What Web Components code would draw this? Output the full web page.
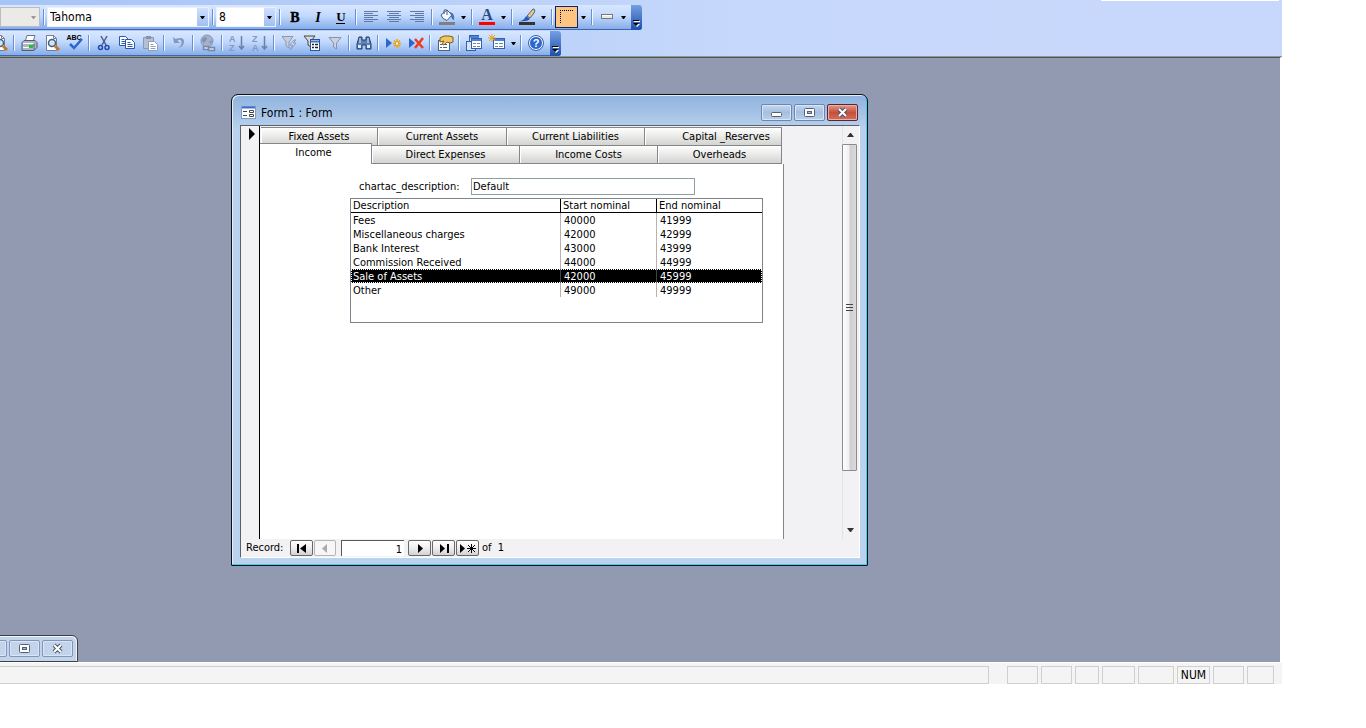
<!DOCTYPE html>
<html lang="en">
<head>
<meta charset="utf-8">
<title>Form1 : Form</title>
<style>
html, body { height: 100%; margin: 0; background: #fff; }
body { font: 11px/14px "DejaVu Sans Condensed", "Noto Sans", sans-serif; color: #000; }
</style>
</head>
<body>
<access-app>
  <tool-bar slot="bars" label="Formatting">
    <tool-combo label="Object" width="40" off></tool-combo>
    <tool-sep></tool-sep>
    <tool-combo label="Font" value="Tahoma" width="162"></tool-combo>
    <tool-sep></tool-sep>
    <tool-combo label="Font size" value="8" width="60"></tool-combo>
    <tool-sep></tool-sep>
    <tool-button icon="bold" label="Bold"></tool-button>
    <tool-button icon="italic" label="Italic"></tool-button>
    <tool-button icon="underline" label="Underline"></tool-button>
    <tool-sep></tool-sep>
    <tool-button icon="left" label="Align left"></tool-button>
    <tool-button icon="center" label="Center"></tool-button>
    <tool-button icon="right" label="Align right"></tool-button>
    <tool-sep></tool-sep>
    <tool-button icon="fill" label="Fill color" menu></tool-button>
    <tool-sep></tool-sep>
    <tool-button icon="fore" label="Font color" menu></tool-button>
    <tool-sep></tool-sep>
    <tool-button icon="brush" label="Line color" menu></tool-button>
    <tool-sep></tool-sep>
    <tool-button icon="border" label="Line width" menu on></tool-button>
    <tool-sep></tool-sep>
    <tool-button icon="effect" label="Special effect" menu></tool-button>
  </tool-bar>
  <tool-bar slot="bars" label="Form view" class="second">
    <tool-button icon="preview" label="Search" clipped></tool-button>
    <tool-sep narrow></tool-sep>
    <tool-button icon="print" label="Print"></tool-button>
    <tool-button icon="preview" label="Print preview"></tool-button>
    <tool-button icon="spell" label="Spelling"></tool-button>
    <tool-sep narrow></tool-sep>
    <tool-button icon="cut" label="Cut"></tool-button>
    <tool-button icon="copy" label="Copy"></tool-button>
    <tool-button icon="paste" label="Paste"></tool-button>
    <tool-sep narrow></tool-sep>
    <tool-button icon="undo" label="Undo"></tool-button>
    <tool-sep narrow></tool-sep>
    <tool-button icon="globe" label="Insert hyperlink"></tool-button>
    <tool-sep narrow></tool-sep>
    <tool-button icon="asc" label="Sort ascending"></tool-button>
    <tool-button icon="desc" label="Sort descending"></tool-button>
    <tool-sep narrow></tool-sep>
    <tool-button icon="filtersel" label="Filter by selection"></tool-button>
    <tool-button icon="filterform" label="Filter by form"></tool-button>
    <tool-button icon="filter" label="Apply filter"></tool-button>
    <tool-sep narrow></tool-sep>
    <tool-button icon="find" label="Find"></tool-button>
    <tool-sep narrow></tool-sep>
    <tool-button icon="newrec" label="New record"></tool-button>
    <tool-button icon="delrec" label="Delete record"></tool-button>
    <tool-sep narrow></tool-sep>
    <tool-button icon="props" label="Properties"></tool-button>
    <tool-sep narrow></tool-sep>
    <tool-button icon="dbwin" label="Database window"></tool-button>
    <tool-button icon="newobj" label="New object" menu></tool-button>
    <tool-sep narrow></tool-sep>
    <tool-button icon="help" label="Help"></tool-button>
  </tool-bar>
  <mdi-window caption="Form1 : Form">
    <record-view>
      <account-tabs></account-tabs>
      <account-form></account-form>
    </record-view>
    <scroll-rail slot="rail"></scroll-rail>
    <record-nav slot="nav"></record-nav>
  </mdi-window>
  <mini-window></mini-window>
  <status-bar slot="status"></status-bar>
</access-app>

<script>
const define = (name, html, setup) => customElements.define(name, class extends HTMLElement {
  connectedCallback() {
    if (this.shadowRoot) return;
    const root = this.attachShadow({ mode: "open" });
    root.innerHTML = typeof html === "function" ? html(this) : html;
    if (setup) setup(this, root);
  }
});

const FUNNEL = '<path d="M3 3.500h12l-4.500 5.500v6l-3-2v-4z"';
const sheet = (x, y, c = "#2a58b0") => `<path d="M${x} ${y}h6l3 3v6h-9z" fill="#fff" stroke="${c}"/><path d="M${x + 2} ${y + 3}h3m-3 2h5m-5 2h5" stroke="${c}" fill="none"/>`;
const lines = (a) => `<path d="${a.map(([x, w], i) => `M${x} ${3.5 + i * 2}h${w}`).join("")}" stroke="#5f7aa8" fill="none"/>`;
const GLASS = '<path d="M3.500 1.500h7l3 3v12h-10z" fill="#fff" stroke="#6f7f9c"/><path d="M10.500 1.500v3h3" fill="none" stroke="#6f7f9c"/><circle cx="9" cy="9" r="3.500" fill="#cfe6f5" stroke="#47617f" stroke-width="1.500"/><path d="M12 12l4 4" stroke="#c47a1c" stroke-width="3"/>';
const ICONS = {
  bold: '<text x="9" y="14" text-anchor="middle" font-family="Liberation Serif" font-weight="700" font-size="14" stroke="#000" stroke-width=".4">B</text>',
  italic: '<text x="9" y="14" text-anchor="middle" font-family="Liberation Serif" font-weight="700" font-style="italic" font-size="14">I</text>',
  underline: '<text x="9" y="13" text-anchor="middle" font-family="Liberation Serif" font-weight="700" font-size="13">U</text><path d="M4 15.500h9" stroke="#000"/>',
  left: lines([[2, 14], [2, 9], [2, 14], [2, 9], [2, 14], [2, 9]]),
  center: lines([[2, 14], [4, 10], [2, 14], [4, 10], [2, 14], [4, 10]]),
  right: lines([[2, 14], [7, 9], [2, 14], [7, 9], [2, 14], [7, 9]]),
  fill: '<path d="M3 7l6-5 5 5-5 5.500-4-2z" fill="#f5f8ff" stroke="#445b85"/><path d="M6 6V2.500q1.500-2 3 0V7" fill="none" stroke="#445b85"/><path d="M12 4q5 1 4 8l-2-1-1-3z" fill="#3e6fc4"/><path d="M1 14h16v3H1z" fill="#808080"/>',
  fore: '<text x="9" y="12" text-anchor="middle" font-family="Liberation Serif" font-weight="700" font-size="16" fill="#2c4a86">A</text><path d="M1 14h16v3H1z" fill="#f00"/>',
  brush: '<path d="M9 8l6-7q3 0 1 4l-4 5z" fill="#f3c877" stroke="#3d5f9e"/><path d="M1 13q5 0 7-5l4 3q-3 3-11 2z" fill="#2a58b0"/><path d="M1 14h16v3H1z" fill="#333"/>',
  border: '<path d="M2 2.500h14M2.500 4v12" fill="none" stroke="#000" stroke-dasharray="1 1"/>',
  effect: '<rect x="3.500" y="6.500" width="11" height="4" fill="#e8e8e8" stroke="#777"/><path d="M4 7.500h10" stroke="#fff"/>',
  preview: GLASS,
  print: '<path d="M5 8l2-6.500h8L13 8" fill="#fff" stroke="#66748c"/><path d="M2 8.500l2-2h11l2 2v5l-3 3H2z" fill="#aeb6c4" stroke="#4e5b70"/><path d="M3 9.500h11M3 13.500h11" stroke="#fff"/><path d="M9 11h4v3H9z" fill="#1fc528"/><path d="M14 9.500v6" stroke="#4e5b70"/>',
  spell: '<text x="8" y="6" text-anchor="middle" font-family="Liberation Sans" font-weight="700" font-size="7">ABC</text><path d="M4 10l4 4 8-9" fill="none" stroke="#2e66d0" stroke-width="2.500"/>',
  cut: '<path d="M6 2l5 9M12 2l-5 9" stroke="#4a5f85" stroke-width="1.500"/><circle cx="5.500" cy="13.500" r="2" fill="none" stroke="#1c4db0" stroke-width="1.500"/><circle cx="12" cy="13.500" r="2" fill="none" stroke="#1c4db0" stroke-width="1.500"/>',
  copy: sheet(1.5, 2.5) + sheet(7.5, 5.5),
  paste: '<path d="M2.500 3.500h10v11h-10z" fill="#b5bfd4" stroke="#8a99b5"/><path d="M5 2h5v3H5z" fill="#8593ae"/>' + sheet(7.5, 7.5, "#8d9dba"),
  undo: '<path d="M3 3l1 6h6L7.500 6.500Q11 4.500 11.500 8T8 14q6-1 6-6.500T5.500 5z" fill="#8798b9"/>',
  globe: '<circle cx="8" cy="7" r="6" fill="#a3b1ca" stroke="#8595b2"/><path d="M4 4q4-2 4 1l-3 4-2-2zM10 8l3-2-1 4z" fill="#8191b0"/><path d="M4.500 12.500h5v3h-5zM9.500 13.500h6v3h-6z" fill="#d7dfee" stroke="#7688aa" stroke-width="1.500"/>',
  asc: '<g font-family="Liberation Sans" font-size="9" font-weight="700" fill="#8798b9"><text x="1" y="8">A</text><text x="1" y="17">Z</text></g><path d="M13.500 2v13M11 12l2.500 3 2.500-3" fill="none" stroke="#6c80a6" stroke-width="1.500"/>',
  desc: '<g font-family="Liberation Sans" font-size="9" font-weight="700" fill="#8798b9"><text x="1" y="8">Z</text><text x="1" y="17">A</text></g><path d="M13.500 2v13M11 12l2.500 3 2.500-3" fill="none" stroke="#6c80a6" stroke-width="1.500"/>',
  filtersel: '<path d="M2 2.500h11l-4 5.500v6l-3-2V8z" fill="#c6cedd" stroke="#8998b3"/><path d="M14 6l-4 5h3l-3 5 6-7h-3l3-3z" fill="#e1e5ef" stroke="#8998b3"/>',
  filterform: '<path d="M1 2h11L8 7v6l-3-2V7z" fill="#d9d9d9" stroke="#454545"/><rect x="7.500" y="5.500" width="9" height="11" fill="#fff" stroke="#29539e"/><path d="M8 7.500h8" stroke="#3f6fc0" stroke-width="2"/><path d="M9 10.500h2m1 0h3m-6 3h2m1 0h3" stroke="#222" stroke-width="1.500"/>',
  filter: FUNNEL + ' fill="#cbd2df" stroke="#8593ab"/>',
  find: '<path d="M4 3h3v3h4V3h3l2 7v5h-5v-4H7v4H2v-5z" fill="#5e7fb2" stroke="#1f3c70"/><path d="M3 11h3v3H3zM12 11h3v3h-3z" fill="#dbe8fa"/><path d="M5 4v5M13 4v5" stroke="#dbe8fa"/>',
  newrec: '<path d="M2 4l6 5-6 5z" fill="#2c66cf"/><path d="M13 5v9M9 9.500h8M10 6.500l6 6m0-6l-6 6" stroke="#eba21b" stroke-width="1.500"/><path d="M12 8.500h2v2h-2z" fill="#fff"/>',
  delrec: '<path d="M2 4l6 5-6 5z" fill="#2c66cf"/><path d="M8 5l8 9M16 4l-8 10" stroke="#ee3b1b" stroke-width="2.500"/>',
  props: '<rect x="2.500" y="6.500" width="11" height="10" fill="#fff" stroke="#50617d"/><path d="M4 10.500h2m1 0h4m-7 3h2m1 0h4" stroke="#50617d"/><path d="M4 4l4-2h5l4 1v5l-3 1-3-1-3 3-2-1 2-3-4 1z" fill="#f3c65f" stroke="#775f27"/>',
  dbwin: '<rect x="4.500" y="1.500" width="9" height="9" fill="#d5e4fb" stroke="#345fa9"/><path d="M5 3h9" stroke="#4f82d6" stroke-width="2"/><rect x="1.500" y="7.500" width="9" height="9" fill="#d5e4fb" stroke="#345fa9"/><rect x="6.500" y="4.500" width="10" height="10" fill="#fff" stroke="#345fa9"/><path d="M7 6h9" stroke="#4f82d6" stroke-width="2"/><path d="M8 9.500h3m1 0h3m-7 3h3m1 0h3" stroke="#6d87b5"/>',
  newobj: '<rect x="5.500" y="4.500" width="11" height="10" fill="#fff" stroke="#345fa9"/><path d="M6 6h10" stroke="#4f82d6" stroke-width="2"/><path d="M7 9.500h3m1 0h4m-8 3h3m1 0h4" stroke="#6d87b5"/><path d="M4 0v8M0 4h8M1 1l6 6m0-6L1 7" stroke="#eba21b"/>',
  help: '<circle cx="9" cy="9" r="6.500" fill="#2c66cf" stroke="#fff"/><circle cx="9" cy="9" r="7.500" fill="none" stroke="#3a64b4"/><text x="9" y="13" text-anchor="middle" font-family="Liberation Sans" font-weight="700" font-size="11" fill="#fff">?</text>'
};

define("access-app", `<style>
  :host { display: flex; flex-direction: column; box-sizing: border-box; height: 100%; min-height: 640px; padding: 0 84px 44px 0; }
  header { background: linear-gradient(90deg, #a6c4f6, #c6d8fb 58%, #c8d8fc); border-bottom: 1px solid #8e9a90; }
  .menu { height: 5px; display: flex; justify-content: flex-end; padding-right: 3px; }
  .menu i { width: 178px; height: 1px; background: #fff; }
  main { flex: 1; position: relative; overflow: hidden; background: #929ab2; border-top: 1px solid #50545a; border-right: 1px solid #fff; margin-right: 1px; }
</style>
<header><div class="menu"><i></i></div><slot name="bars"></slot></header>
<main><slot></slot></main>
<slot name="status"></slot>`);

define("tool-bar", el => `<style>
  :host { display: flex; width: max-content; height: 25px; margin-bottom: 1px; border-radius: 0 3px 3px 0; box-sizing: border-box;
    background: linear-gradient(#d9e7ff, #c2d9fd 45%, #86ade9); border-bottom: 1px solid #3d66ae; }
  :host(.second) { margin-bottom: 0; }
  div { display: flex; align-items: center; padding-right: 3px; }
  .more { width: 11px; padding: 0; border: 0; border-radius: 0 3px 3px 0; background: linear-gradient(#769fe0, #1d4fae); height: 25px; display: flex; align-items: flex-end; justify-content: center; }
  svg { display: block; margin-bottom: 2px; }
</style>
<div role="toolbar" aria-label="${el.getAttribute("label")}"><slot></slot></div>
<button class="more" aria-label="Toolbar options"><svg width="9" height="9"><path d="M2 2h6v1H2zM2 5h6L5 8z" fill="#fff"/><path d="M1 1h6v1H1zM1 4h6L4 7z" fill="#000"/></svg></button>`);

define("tool-sep", `<style>
  :host { display: flex; width: 7px; justify-content: center; }
  :host([narrow]) { width: 6px; }
  i { width: 1px; height: 16px; background: #6a8fce; border-right: 1px solid #f3f8ff; }
</style><i></i>`);

define("tool-button", el => `<style>
  :host { display: flex; height: 24px; align-items: center; }
  :host([clipped]) { margin-left: -12px; }
  button { width: 23px; height: 22px; padding: 0; border: 0; background: none; display: flex; align-items: center; justify-content: center; box-sizing: border-box; }
  :host([on]) .main { border: 1px solid #0a246a; background: #fdc482; }
  .drop { width: 10px; }
  svg { display: block; flex: none; overflow: visible; }
</style>
<button class="main" aria-label="${el.getAttribute("label")}"><svg width="18" height="18" fill="#000">${ICONS[el.getAttribute("icon")]}</svg></button>
${el.hasAttribute("menu") ? `<button class="drop" aria-label="${el.getAttribute("label")} menu"><svg width="5" height="3"><path d="M0 0h5L3 3H2z"/></svg></button>` : ""}`);

define("tool-combo", el => `<style>
  :host { display: grid; grid-template-columns: 1fr 11px; height: 20px; width: ${el.getAttribute("width")}px; border: 1px solid #e9f1ff; box-sizing: border-box; background: #fff; }
  :host([off]) { background: #eceae6; border-color: #b9bcc4; }
  select { appearance: none; grid-area: 1 / 1 / 2 / 3; border: 0; margin: 0; padding: 0 12px 0 2px; background: none; font: 12px/16px "DejaVu Sans Condensed", "Noto Sans", sans-serif; color: #000; min-width: 0; outline: 0; }
  span { grid-area: 1 / 2; background: linear-gradient(#cfe0fd, #9fbff2); display: flex; align-items: center; justify-content: center; pointer-events: none; }
  :host([off]) span { background: none; }
  path { fill: #000; }
  :host([off]) path { fill: #999; }
</style>
<select aria-label="${el.getAttribute("label")}" ${el.hasAttribute("off") ? "disabled" : ""}><option>${el.getAttribute("value") || ""}</option></select>
<span><svg width="5" height="3"><path d="M0 0h5L3 3H2z"/></svg></span>`);

const GLYPHS = {
  Minimize: '<rect x="2.500" y="6.500" width="10" height="4" rx="1" fill="#fff" stroke="#566075"/>',
  Restore: '<rect x="2.500" y="2.500" width="10" height="8" rx="1" fill="#fff" stroke="#566075"/><rect x="5.500" y="5.500" width="4" height="2" fill="#9fb8d8" stroke="#566075"/>',
  Close: '<path d="M4 3l7 7M11 3l-7 7" stroke="#4b5468" stroke-width="4"/><path d="M4 3l7 7M11 3l-7 7" stroke="#fff" stroke-width="2"/>'
};
define("caption-button", el => `<style>
  :host { display: block; }
  button { display: flex; justify-content: center; align-items: center; width: 31px; height: 17px; padding: 0; border: 1px solid #6f85ab; border-radius: 2px; box-shadow: inset 0 0 0 1px #d8e6f8; background: linear-gradient(#c3d7f0, #a5bfdf 50%, #b7d0ec); box-sizing: border-box; }
  :host([danger]) button { border-color: #5c2430; box-shadow: inset 0 0 0 1px #e8b1a8; background: linear-gradient(#e29a8c, #c6503c 50%, #d0705a); }
  :host([pale]) button { background: #c2d4ea; border-color: #8095b8; }
</style><button aria-label="${el.getAttribute("kind")}"><svg width="15" height="13">${GLYPHS[el.getAttribute("kind")]}</svg></button>`);

define("mdi-window", el => `<style>
  :host { position: absolute; left: 231px; top: 36px; width: 637px; height: 472px; box-sizing: border-box; display: flex; flex-direction: column;
    border: 1px solid #0c1018; border-radius: 7px 7px 1px 1px; padding: 0 7px 7px 8px; background: linear-gradient(#8fb2dd, #b9d1ee 34px, #b9d3ef);
    box-shadow: inset -1px -1px #35d2f2, inset 1px 1px #e3f0fc; }
  header { height: 30px; display: flex; align-items: center; gap: 2px; padding: 4px 2px 0 1px; box-sizing: border-box; }
  h1 { flex: 1; margin: 0; padding: 1px 0 0 3px; font: 12px/16px "DejaVu Sans Condensed", "Noto Sans", sans-serif; }
  .client { flex: 1; min-height: 0; display: grid; grid-template: 1fr 18px / 19px 1fr 17px; background: #f2f1f3; border: 1px solid; border-color: #5c6068 #fff #fff #5c6068; }
  .selector { border-right: 1px solid #000; padding: 2px 0 0 8px; }
  .nav { grid-column: 1 / 4; }
  svg { display: block; }
</style>
<header><svg width="15" height="13"><rect x=".5" y=".5" width="14" height="12" fill="#fff" stroke="#7f9cc9"/><path d="M1 1.500h13" stroke="#3f6fd0" stroke-width="2"/><path d="M2 5.500h4m-4 4h4" stroke="#444"/><path d="M8.500 4.500h4v2h-4zM8.500 8.500h4v2h-4z" fill="none" stroke="#444"/></svg>
<h1>${el.getAttribute("caption")}</h1>
<caption-button kind="Minimize"></caption-button><caption-button kind="Restore"></caption-button><caption-button kind="Close" danger></caption-button></header>
<div class="client"><div class="selector"><svg width="6" height="12"><path d="M0 0l6 6-6 6z"/></svg></div><slot></slot><slot name="rail"></slot><div class="nav"><slot name="nav"></slot></div></div>`);

define("record-view", `<style>
  :host { display: flex; flex-direction: column; width: 524px; padding-top: 1px; min-height: 0; box-sizing: border-box; }
</style><slot></slot>`);

define("account-tabs", `<style>
  :host { display: block; }
  div { display: grid; padding-right: 2px; }
  button { font: inherit; color: #000; height: 18px; padding: 1px 0 0; margin: 0; border: 1px solid #85868c; border-width: 1px 1px 0 0; background: linear-gradient(#fff, #f0f0ee 35%, #d2d4d0); box-shadow: inset 1px 0 #fff; box-sizing: border-box; }
  .back { grid-template-columns: 117fr 129fr 138fr 137fr; padding-left: 1px; }
  .back button:last-child { padding-left: 26px; }
  .front { grid-template-columns: 112fr 148fr 138fr 124fr; }
  .front button { border-bottom-width: 1px; height: 19px; }
  .front .on { height: 21px; margin-top: -2px; border-bottom: 0; background: #fff; padding: 0 4px 2px 0; }
</style>
<div class="back"><button>Fixed Assets</button><button>Current Assets</button><button>Current Liabilities</button><button>Capital _Reserves</button></div>
<div class="front"><button class="on">Income</button><button>Direct Expenses</button><button>Income Costs</button><button>Overheads</button></div>`);

define("account-form", `<style>
  :host { flex: 1; display: block; background: #fff; border-right: 1px solid #85868c; padding: 14px 20px 0 90px; min-height: 0; }
  .field { display: flex; align-items: center; padding-left: 9px; margin-bottom: 3px; }
  label { width: 112px; }
  input { width: 224px; height: 17px; box-sizing: border-box; border: 1px solid #8e9fa6; padding: 0 1px; font: inherit; color: #000; outline: 0; }
  .list { height: 123px; border: 1px solid #7c858c; }
  table { width: 100%; border-collapse: separate; border-spacing: 0; table-layout: fixed; }
  th, td { font-weight: 400; text-align: left; height: 13px; line-height: 13px; padding: 1px 0 0 2px; border-left: 1px solid #b4b4b4; }
  th { border-color: #000; border-bottom: 1px solid #000; height: 12px; line-height: 12px; }
  td + td { padding-left: 3px; }
  th:first-child, td:first-child { border-left: 0; }
  .w1 { width: 209px; } .w2 { width: 96px; }
  .sel td { background: #000; color: #fff; border-left-color: #3c463c; }
  .sel { outline: 1px dotted #fff; outline-offset: -1px; }
</style>
<div class="field"><label for="d">chartac_description:</label><input id="d" value="Default"></div>
<div class="list"><table><colgroup><col class="w1"><col class="w2"><col></colgroup>
<thead><tr><th>Description</th><th>Start nominal</th><th>End nominal</th></tr></thead><tbody></tbody></table></div>`,
(el, root) => {
  const rows = [["Fees", 40000, 41999], ["Miscellaneous charges", 42000, 42999], ["Bank Interest", 43000, 43999], ["Commission Received", 44000, 44999], ["Sale of Assets", 42000, 45999], ["Other", 49000, 49999]];
  root.querySelector("tbody").innerHTML = rows.map((r, i) => `<tr${i === 4 ? ' class="sel"' : ""}>${r.map(c => `<td>${c}</td>`).join("")}</tr>`).join("");
});

define("scroll-rail", `<style>
  :host { display: flex; flex-direction: column; align-items: center; width: 15px; justify-self: start; border-left: 1px solid #e3e3e5; box-sizing: border-box; }
  .arrow { height: 18px; display: flex; align-items: center; flex: none; }
  .thumb { flex: 327; width: 15px; margin-left: -1px; box-sizing: border-box; border: 1px solid #8c8c90; border-radius: 1px; background: linear-gradient(90deg, #fdfdfd, #f0f0f0 45%, #cfcfd1 55%, #dadadc); display: flex; align-items: center; justify-content: center; }
  .rest { flex: 50; }
</style>
<div class="arrow"><svg width="7" height="4"><path d="M0 4h7L4 0H3z" fill="#333"/></svg></div>
<div class="thumb"><svg width="7" height="8"><path d="M0 .5h7M0 3.500h7M0 6.500h7" stroke="#444"/></svg></div>
<div class="rest"></div>
<div class="arrow"><svg width="7" height="4"><path d="M0 0h7L4 4H3z" fill="#333"/></svg></div>`);

const NAV = {
  First: '<path d="M3 2h2v9H3zM12 2v9L6 6.500z"/>',
  Previous: '<path d="M10 2v9L5 6.500z" fill="#aaa"/>',
  Next: '<path d="M6 2v9l5-4.500z"/>',
  Last: '<path d="M4 2v9l5-4.500zM11 2h2v9h-2z"/>',
  New: '<path d="M0 2v9l5-4.500z"/><path d="M11.500 2v9M7 6.500h9M8 3l7 7M15 3l-7 7" stroke="#000"/>'
};
const navButton = k => `<button aria-label="${k} record"${k === "Previous" ? " disabled" : ""}><svg width="16" height="13">${NAV[k]}</svg></button>`;
define("record-nav", `<style>
  :host { display: flex; align-items: center; height: 18px; padding-left: 5px; }
  label { width: 44px; }
  button { width: 23px; height: 16px; padding: 0; margin-right: 1px; border: 1px solid #66686c; border-radius: 2px; background: linear-gradient(#fff, #eee 50%, #d2d2d2); display: flex; align-items: center; justify-content: center; box-sizing: border-box; }
  button:disabled { border-color: #b5b5b8; background: #f6f6f6; width: 22px; }
  input { width: 63px; height: 16px; margin: 0 4px; padding: 2px 2px 0 0; text-align: right; border: 0; border-top: 1px solid #55585e; border-left: 1px solid #55585e; box-sizing: border-box; font: inherit; color: #000; background: #fff; outline: 0; }
  span { padding-left: 2px; white-space: pre; }
</style>
<label for="n">Record:</label>${navButton("First")}${navButton("Previous")}<input id="n" value="1">${navButton("Next")}${navButton("Last")}${navButton("New")}<span>of  1</span>`);

define("mini-window", `<style>
  :host { position: absolute; left: -29px; bottom: 0; display: flex; gap: 2px; padding: 4px; border: 1px solid #3c4048; border-radius: 0 6px 0 0; background: #c4d4e8; box-shadow: inset -1px 1px #eef4fb; }
</style><caption-button kind="Minimize" pale></caption-button><caption-button kind="Restore" pale></caption-button><caption-button kind="Close" pale></caption-button>`);

define("status-bar", `<style>
  :host { display: flex; gap: 3px; height: 22px; padding: 3px 8px 0 0; box-sizing: border-box; background: #f5f4f5; border-top: 1px solid #fff; font: 12px/16px "DejaVu Sans Condensed", "Noto Sans", sans-serif; }
  span { box-sizing: border-box; border: 1px solid #cfcfcf; width: 31px; height: 18px; text-align: center; flex: none; }
  .msg { flex: 1; margin-right: 15px; border-left: 0; }
  .s { width: 24px; } .m { width: 33px; } .l { width: 36px; } .e { width: 27px; }
</style><span class="msg"></span><span></span><span></span><span class="s"></span><span class="m"></span><span class="l"></span><span class="m">NUM</span><span></span><span class="e"></span>`);
</script>
</body>
</html>
